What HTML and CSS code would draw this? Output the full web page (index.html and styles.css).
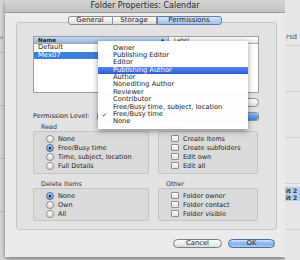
FILE: index.html
```html
<!DOCTYPE html>
<html lang="en">
<head>
  <meta charset="UTF-8">
  <title>Folder Properties: Calendar</title>
  <link rel="stylesheet" href="styles.css">
</head>
<body>
  <div class="desk desk-left">
    <span class="desk-text left-text">o</span>
  </div>

  <div class="window">
    <div class="titlebar">Folder Properties: Calendar</div>

    <div class="tabs">
      <span class="tab tab-general">General</span>
      <span class="tab tab-storage">Storage</span>
      <span class="tab tab-perms active">Permissions</span>
    </div>

    <div class="panel">
      <div class="list">
        <div class="list-head">
          <span class="col-name">Name <i class="sort">&#9650;</i></span>
          <span class="col-label">Label</span>
        </div>
        <div class="row">Default</div>
        <div class="row selected">Mex07</div>
      </div>

      <div class="list-buttons">
        <span class="small-btn"></span>
      </div>

      <div class="level-row">
        <span class="level-label">Permission Level:</span>
        <span class="popup"><span class="popup-arrows"></span></span>
      </div>

      <div class="groups">
        <div class="group">
          <div class="group-title">Read</div>
          <div class="group-box">
            <div class="opt"><span class="radio"></span>None</div>
            <div class="opt"><span class="radio on"></span>Free/Busy time</div>
            <div class="opt"><span class="radio"></span>Time, subject, location</div>
            <div class="opt"><span class="radio"></span>Full Details</div>
          </div>
        </div>
        <div class="group">
          <div class="group-title">Write</div>
          <div class="group-box">
            <div class="opt"><span class="check"></span>Create Items</div>
            <div class="opt"><span class="check"></span>Create subfolders</div>
            <div class="opt"><span class="check"></span>Edit own</div>
            <div class="opt"><span class="check"></span>Edit all</div>
          </div>
        </div>
        <div class="group">
          <div class="group-title">Delete Items</div>
          <div class="group-box short">
            <div class="opt"><span class="radio on"></span>None</div>
            <div class="opt"><span class="radio"></span>Own</div>
            <div class="opt"><span class="radio"></span>All</div>
          </div>
        </div>
        <div class="group">
          <div class="group-title">Other</div>
          <div class="group-box short">
            <div class="opt"><span class="check"></span>Folder owner</div>
            <div class="opt"><span class="check"></span>Folder contact</div>
            <div class="opt"><span class="check"></span>Folder visible</div>
          </div>
        </div>
      </div>
    </div>

    <div class="actions">
      <button class="btn">Cancel</button>
      <button class="btn default">OK</button>
    </div>

    <!-- popup menu of Permission Level, open over the list -->
    <ul class="menu">
      <li>Owner</li>
      <li>Publishing Editor</li>
      <li>Editor</li>
      <li class="hover">Publishing Author</li>
      <li>Author</li>
      <li>Nonediting Author</li>
      <li>Reviewer</li>
      <li>Contributor</li>
      <li>Free/Busy time, subject, location</li>
      <li class="checked">Free/Busy time</li>
      <li>None</li>
    </ul>
  </div>

  <div class="desk desk-right">
    <span class="desk-text right-text">rsd</span>
    <div class="desk-rows">
      <div class="desk-row">it 2</div>
      <div class="desk-row">it 2</div>
    </div>
  </div>
</body>
</html>
```

FILE: styles.css
```css
body {
  margin: 0;
  width: 300px;
  height: 260px;
  overflow: hidden;
  display: flex;
  font-family: "DejaVu Sans", Verdana, sans-serif;
  font-size: 6px;
  color: #222;
  background: #d8d8d8;
}

/* desktop bits around the window */
.desk {
  position: relative;
  height: 260px;
  background: linear-gradient(#e2e2e2, #d6d6d6);
}
.desk-left {
  width: 5px;
  background: repeating-linear-gradient(#d9d9d9 0 52px, #c4c4c4 52px 53px);
}
.desk-right {
  flex: 1;
  background: repeating-linear-gradient(#e6e6e6 0 45px, #cfcfcf 45px 46px);
}
.desk-text {
  display: block;
  font-size: 7px;
  color: #555;
}
.left-text {
  margin: 34px 0 0 0;
  font-size: 5px;
}
.right-text {
  margin: 33px 0 0 1px;
}
.desk-rows {
  margin-top: 146px;
}
.desk-row {
  height: 7px;
  line-height: 7px;
  padding-left: 1px;
  font-weight: bold;
  color: #234;
  background: #b6cce8;
}

/* window */
.window {
  position: relative;
  width: 280px;
  height: 257px;
  background: #ebebeb;
  box-shadow: 0 2px 5px rgba(0, 0, 0, 0.45);
}
.titlebar {
  height: 12px;
  line-height: 11px;
  text-align: center;
  font-size: 8px;
  color: #2a2a2a;
  background: linear-gradient(#d4d4d4, #c2c2c2);
  border-bottom: 1px solid #9a9a9a;
}

.tabs {
  position: relative;
  z-index: 1;
  display: flex;
  justify-content: center;
  margin: 3px 0 -3px;
  padding-right: 1px;
}
.tab {
  box-sizing: border-box;
  height: 9px;
  line-height: 7px;
  text-align: center;
  font-size: 7px;
  color: #222;
  background: linear-gradient(#fdfdfd, #dcdcdc);
  border: 1px solid #8d8d8d;
  border-left: none;
}
.tab-general {
  width: 45px;
  border-left: 1px solid #8d8d8d;
  border-radius: 3px 0 0 3px;
}
.tab-storage {
  width: 44px;
}
.tab-perms {
  width: 65px;
  border-radius: 0 3px 3px 0;
}
.tab.active {
  background: linear-gradient(#d6e6fa, #9cc0ec);
  border-color: #5c7fb0;
  border-left: 1px solid #5c7fb0;
}

.panel {
  width: 226px;
  height: 193px;
  margin-left: 11px;
  padding: 13px 17px 0 16px;
  background: #e2e2e2;
  border: 1px solid #c6c6c6;
  border-radius: 3px;
}

/* account list */
.list {
  height: 57px;
  background: #fff;
  border: 1px solid #9c9c9c;
  box-sizing: border-box;
}
.list-head {
  display: flex;
  height: 6px;
  line-height: 6px;
  font-size: 5.6px;
  font-weight: bold;
  border-bottom: 1px solid #a5a5a5;
}
.col-name {
  display: flex;
  justify-content: space-between;
  width: 126px;
  padding: 0 4px;
  color: #223;
  background: linear-gradient(#c8dbf2, #93b4de);
  border-right: 1px solid #8ba4c6;
}
.sort {
  font-style: normal;
  font-size: 4px;
}
.col-label {
  flex: 1;
  padding-left: 5px;
  font-weight: normal;
  background: linear-gradient(#fdfdfd, #e6e6e6);
}
.row {
  width: 124px;
  height: 7.5px;
  line-height: 7.5px;
  padding-left: 4px;
  font-size: 6.8px;
}
.row.selected {
  color: #fff;
  background: #3d7fdc;
}

.list-buttons {
  display: flex;
  justify-content: flex-end;
  margin-top: 5px;
}
.small-btn {
  width: 18px;
  height: 7px;
  border: 1px solid #8d8d8d;
  border-radius: 5px;
  background: linear-gradient(#fff, #e0e0e0);
}

.level-row {
  display: flex;
  align-items: center;
  height: 8px;
  margin-top: 5px;
}
.level-label {
  width: 64px;
  font-size: 6.5px;
}
.popup {
  display: flex;
  justify-content: flex-end;
  flex: 1;
  height: 7px;
  border: 1px solid #8d8d8d;
  border-radius: 3px;
  background: linear-gradient(#fff, #e4e4e4);
}
.popup-arrows {
  width: 13px;
  border-radius: 0 3px 3px 0;
  background: linear-gradient(#8fb8ee, #3f7fd6);
}

/* permission groups */
.groups {
  display: grid;
  grid-template-columns: 116px 100px;
  column-gap: 9px;
  margin-top: 3px;
}
.group-title {
  height: 8px;
  line-height: 8px;
  padding-left: 8px;
  font-size: 6.4px;
  color: #333;
}
.group:nth-child(3) .group-title,
.group:nth-child(4) .group-title {
  margin-top: 6px;
}
.group-box {
  height: 39px;
  padding-top: 2px;
  background: #dadada;
  border: 1px solid #c4c4c4;
  border-radius: 2px;
}
.group-box.short {
  height: 29px;
}
.opt {
  display: flex;
  align-items: center;
  height: 9px;
  padding-left: 12px;
  font-size: 6.5px;
}
.radio {
  width: 6px;
  height: 6px;
  margin-right: 4px;
  border: 1px solid #8a8a8a;
  border-radius: 50%;
  background: linear-gradient(#fff, #dcdcdc);
}
.radio.on {
  border-color: #4e6e9c;
  background: radial-gradient(circle, #1b2a40 0 1.3px, transparent 1.6px), linear-gradient(#b3d0f4, #5d93dc);
}
.check {
  width: 6px;
  height: 5px;
  margin-right: 4px;
  border: 1px solid #8d8d8d;
  border-radius: 1px;
  background: linear-gradient(#fff, #e6e6e6);
}

/* bottom buttons */
.actions {
  display: flex;
  justify-content: flex-end;
  gap: 6px;
  margin-top: 9px;
  padding-right: 10px;
}
.btn {
  width: 49px;
  height: 9px;
  padding: 0;
  font-family: "DejaVu Sans", Verdana, sans-serif;
  font-size: 6.8px;
  line-height: 7px;
  color: #222;
  border: 1px solid #7f7f7f;
  border-radius: 5px;
  background: linear-gradient(#fff, #dadada);
}
.btn.default {
  width: 47px;
  border-color: #4a6c9e;
  background: linear-gradient(#cfe3fb, #7fb0ee 55%, #a9cdf6);
}

/* open popup menu */
.menu {
  position: absolute;
  left: 93px;
  top: 41px;
  width: 150px;
  margin: 0;
  padding: 3.5px 0;
  list-style: none;
  background: rgba(255, 255, 255, 0.97);
  box-shadow: 0 2px 6px rgba(0, 0, 0, 0.4);
}
.menu li {
  position: relative;
  height: 7.4px;
  line-height: 7.4px;
  padding-left: 15px;
  font-size: 6.7px;
  color: #1a1a1a;
}
.menu li.hover {
  color: #fff;
  background: linear-gradient(#5a86ea, #2a5bd8);
}
.menu li.checked::before {
  content: "\2713";
  position: absolute;
  left: 4px;
  font-size: 6px;
}
```
